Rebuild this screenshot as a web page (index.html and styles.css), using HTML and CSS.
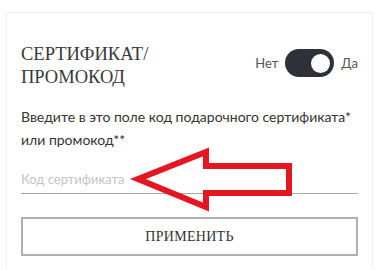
FILE: index.html
```html
<!DOCTYPE html>
<html lang="ru">
<head>
    <meta charset="UTF-8">
    <meta name="viewport" content="width=device-width, initial-scale=1.0">
    <title>Сертификат / промокод</title>
    <link rel="stylesheet" href="styles.css">
</head>
<body>

<div class="promo-card">
    <div class="promo-header">
        <h2 class="promo-title">СЕРТИФИКАТ/<br>ПРОМОКОД</h2>
        <div class="promo-switch">
            <span class="switch-label">Нет</span>
            <span class="switch-track" role="switch" aria-checked="true">
                <span class="switch-knob"></span>
            </span>
            <span class="switch-label">Да</span>
        </div>
    </div>

    <p class="promo-text">Введите в это поле код подарочного сертификата* или промокод**</p>

    <input class="promo-input" type="text" placeholder="Код сертификата">

    <button class="promo-button" type="button">ПРИМЕНИТЬ</button>

    <!-- red annotation arrow drawn over the form -->
    <svg class="promo-arrow" width="380" height="270" viewBox="0 0 380 270" aria-hidden="true">
        <polygon points="138,179 206,152 206,166 289,166 289,193 206,193 206,207"
                 fill="none" stroke="#e4161f" stroke-width="6" stroke-linejoin="miter"/>
    </svg>
</div>

</body>
</html>
```

FILE: styles.css
```css
body {
    margin: 0;
    background-color: #fff;
    font-family: "Lato", "Noto Sans", sans-serif;
    color: #333;
}

.promo-card {
    margin: 12px 7px 0 6px;
    padding: 30px 14px 12px 14px;
    border: 1px solid #efefef;
    border-bottom: none;
}

.promo-header {
    display: flex;
    justify-content: space-between;
    align-items: flex-start;
}

.promo-title {
    margin: 0;
    font-family: "Liberation Serif", "Times New Roman", serif;
    font-weight: normal;
    font-size: 18.5px;
    line-height: 23px;
    color: #383838;
}

.promo-switch {
    display: flex;
    align-items: center;
    gap: 7px;
    margin-top: 6px;
}

.switch-label {
    font-size: 13px;
    color: #555;
}

.switch-track {
    display: flex;
    justify-content: flex-end;
    align-items: center;
    width: 49px;
    height: 28px;
    padding: 0 4px;
    box-sizing: border-box;
    border-radius: 14px;
    background-color: #2e3139;
}

.switch-knob {
    width: 19px;
    height: 19px;
    border-radius: 50%;
    background-color: #fff;
}

.promo-text {
    margin: 16px 0 0 0;
    font-size: 14px;
    line-height: 23px;
}

.promo-input {
    display: block;
    width: 100%;
    height: 29px;
    margin-top: 14px;
    padding: 0;
    box-sizing: border-box;
    border: none;
    border-bottom: 1px solid #a8a8a8;
    font-family: inherit;
    font-size: 13px;
    color: #333;
    outline: none;
}

.promo-input::placeholder {
    color: #c4c4c4;
}

.promo-button {
    display: block;
    width: 100%;
    height: 39px;
    margin-top: 23px;
    box-sizing: border-box;
    background-color: #fff;
    border: 2px solid #b0b0b0;
    font-family: "Liberation Serif", "Times New Roman", serif;
    font-size: 14px;
    letter-spacing: 0.3px;
    color: #333;
    cursor: pointer;
}

.promo-arrow {
    position: absolute;
    top: 0;
    left: 0;
    pointer-events: none;
}
```
